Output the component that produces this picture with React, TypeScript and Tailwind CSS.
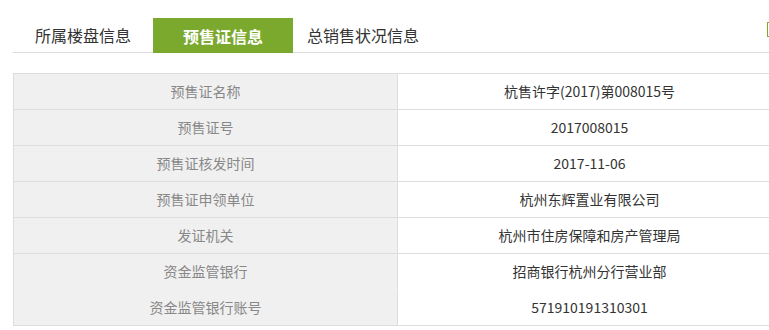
import React from "react";

const rows: [string, string][] = [
  ["预售证名称", "杭售许字(2017)第008015号"],
  ["预售证号", "2017008015"],
  ["预售证核发时间", "2017-11-06"],
  ["预售证申领单位", "杭州东辉置业有限公司"],
  ["发证机关", "杭州市住房保障和房产管理局"],
  ["资金监管银行", "招商银行杭州分行营业部"],
  ["资金监管银行账号", "571910191310301"],
];

const tabs = ["所属楼盘信息", "预售证信息", "总销售状况信息"];

export default function App() {
  return (
    <div
      className="relative w-[769px] h-[330px] overflow-hidden bg-white"
      style={{ fontFamily: '"Microsoft YaHei", "Noto Sans CJK SC", "Noto Sans", sans-serif' }}
    >
      <div className="pt-[18px] pl-[13px]">
        <div className="flex h-[35px] w-[800px] border-b border-[#dddddd]">
          {tabs.map((t, i) => (
            <div
              key={t}
              className={
                i === 1
                  ? "w-[140px] h-[35px] flex items-center justify-center bg-[#7aa92e] text-white font-bold text-[16px] -mb-px"
                  : "w-[140px] h-[34px] flex items-center justify-center text-[#333333] text-[16px]"
              }
            >
              {t}
            </div>
          ))}
        </div>
        <div className="mt-[20px] w-[769px] border border-[#dddddd] text-[14px]">
          {rows.map(([k, v], i) => (
            <div key={k} className="flex">
              <div
                className={
                  i === 6
                    ? "w-[383px] h-[35px] flex items-center justify-center bg-[#f0f0f0] text-[#888888]"
                    : "w-[383px] h-[36px] flex items-center justify-center bg-[#f0f0f0] text-[#888888] border-b " +
                      (i === 5 ? "border-transparent" : "border-[#dddddd]")
                }
              >
                {k}
              </div>
              <div
                className={
                  i === 6
                    ? "flex-1 h-[35px] flex items-center justify-center bg-white text-[#333333] border-l border-l-[#dddddd]"
                    : "flex-1 h-[36px] flex items-center justify-center bg-white text-[#333333] border-l border-l-[#dddddd] border-b " +
                      (i === 5 ? "border-b-transparent" : "border-b-[#dddddd]")
                }
              >
                {v}
              </div>
            </div>
          ))}
        </div>
      </div>
      <div className="absolute left-[767px] top-[22px] w-[12px] h-[15px] border border-[#7aa92e]" />
    </div>
  );
}
